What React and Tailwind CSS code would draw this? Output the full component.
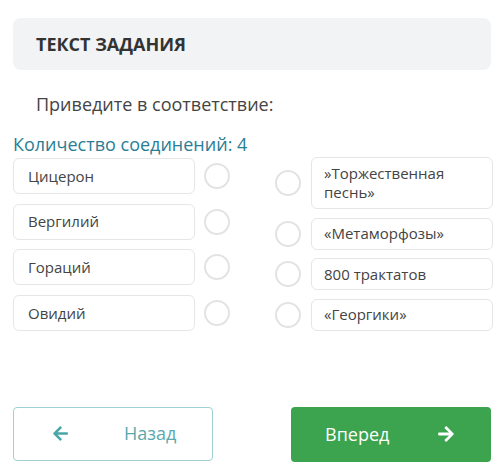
import { FaArrowLeft, FaArrowRight } from 'react-icons/fa';

const LEFT = ['Цицерон', 'Вергилий', 'Гораций', 'Овидий'];
const RIGHT = [
  { text: '»Торжественная песнь»', h: 'h-[52px]' },
  { text: '«Метаморфозы»', h: 'h-[32px]' },
  { text: '800 трактатов', h: 'h-[32px]' },
  { text: '«Георгики»', h: 'h-[32px]' },
];

function Circle() {
  return <div className="w-[26px] h-[26px] rounded-full border-2 border-[#e3e3e3] bg-white shrink-0" />;
}

export default function App() {
  return (
    <div className="w-[500px] h-[474px] bg-white px-[13px] pt-[18px] text-[#3d3d3d]" style={{ fontFamily: '"Open Sans", sans-serif' }}>
      <div className="h-[52px] rounded-lg bg-[#f2f3f5] flex items-center px-[23px] mr-[-4px]">
        <span className="text-[18px] leading-[24px] font-bold text-[#333]">ТЕКСТ ЗАДАНИЯ</span>
      </div>

      <p className="mt-[21px] pl-[23px] text-[18px] leading-[26px] text-[#444]">Приведите в соответствие:</p>
      <p className="mt-[16px] text-[18px] leading-[22px] text-[#2a7d95]">Количество соединений: 4</p>

      <div className="mt-[3px] flex">
        <div className="flex flex-col gap-[9.6px]">
          {LEFT.map(t => (
            <div key={t} className="flex items-center">
              <div className="w-[182px] h-[36px] rounded-md border border-[#e6e6e6] bg-white flex items-center px-[14px] text-[15px] text-[#444]">
                {t}
              </div>
              <div className="ml-[9px]"><Circle /></div>
            </div>
          ))}
        </div>

        <div className="ml-[45px] -mt-[1px] flex flex-col gap-[8.5px]">
          {RIGHT.map(r => (
            <div key={r.text} className="flex items-center">
              <Circle />
              <div className={`ml-[10px] w-[182px] ${r.h} rounded-md border border-[#e6e6e6] bg-white flex items-center px-[12px] text-[15px] leading-[19px] text-[#444]`}>
                {r.text}
              </div>
            </div>
          ))}
        </div>
      </div>

      <div className="mt-[76px] flex justify-between w-[478px]">
        <button className="w-[200px] h-[54px] rounded border border-[#9fd0d3] bg-white flex items-center pl-[38px] text-[#5aa9ad]">
          <FaArrowLeft className="w-[17px] h-[17px] text-[#4aa6a9]" />
          <span className="ml-[55px] text-[18px]">Назад</span>
        </button>
        <button className="w-[200px] h-[55px] rounded bg-[#3ca34f] flex items-center pl-[34px] text-white">
          <span className="text-[18px]">Вперед</span>
          <FaArrowRight className="ml-[48px] w-[18px] h-[18px]" />
        </button>
      </div>
    </div>
  );
}
